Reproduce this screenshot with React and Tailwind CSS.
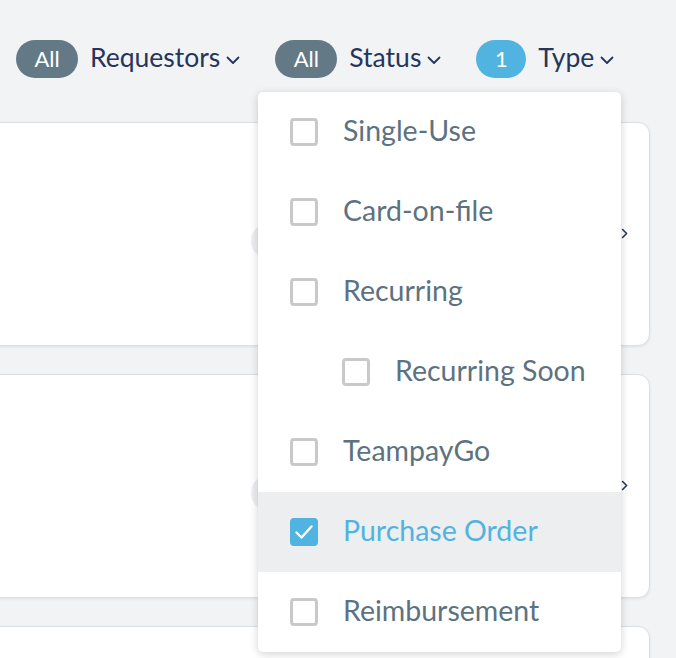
import React from 'react';

const font = { fontFamily: 'Lato, "Noto Sans", sans-serif' };

function Chevron({ className }) {
  return (
    <svg viewBox="0 0 16 16" className={className} fill="none" stroke="currentColor" strokeWidth="1.8" strokeLinecap="round" strokeLinejoin="round">
      <path d="M2.5 5.5l5.5 5.5 5.5-5.5" />
    </svg>
  );
}

function Filter({ count, label, active }) {
  return (
    <div className="flex items-center">
      <span
        className={`flex h-[38px] items-center justify-center rounded-full pb-[2px] text-[22px] text-white ${
          active ? 'w-[50px] bg-[#51b3e0]' : 'w-[62px] bg-[#637985]'
        }`}
      >
        {count}
      </span>
      <span className="ml-[12px] pb-[4px] text-[26.5px] leading-none text-[#26355c]">{label}</span>
      <Chevron className="ml-[5px] mt-[2px] h-[16px] w-[16px] text-[#26355c]" />
    </div>
  );
}

function Checkbox({ checked }) {
  if (checked) {
    return (
      <span className="flex h-[28px] w-[28px] shrink-0 items-center justify-center rounded-[4px] bg-[#51b3e0]">
        <svg viewBox="0 0 28 28" className="h-[28px] w-[28px]" fill="none" stroke="white" strokeWidth="2.4" strokeLinecap="round" strokeLinejoin="round">
          <path d="M6.5 14.5l5 5 10-11" />
        </svg>
      </span>
    );
  }
  return <span className="h-[28px] w-[28px] shrink-0 rounded-[4px] border-[3px] border-[#c9c9c9] bg-white" />;
}

const items = [
  { label: 'Single-Use' },
  { label: 'Card-on-file' },
  { label: 'Recurring' },
  { label: 'Recurring Soon', nested: true },
  { label: 'TeampayGo' },
  { label: 'Purchase Order', checked: true },
  { label: 'Reimbursement' },
];

function Card() {
  return (
    <div className="relative flex h-[224px] w-[676px] items-center rounded-r-[12px] border border-[#dcdfe3] bg-white shadow-[0_1px_3px_rgba(0,0,0,0.08)]">
      <span className="absolute left-[276px] top-[100px] h-[36px] w-[36px] rounded-full bg-[#eceef1]" />
      <svg viewBox="0 0 10 14" className="absolute left-[646px] top-[104px] h-[13px] w-[8px] text-[#26355c]" fill="none" stroke="currentColor" strokeWidth="2" strokeLinecap="round" strokeLinejoin="round">
        <path d="M2 2l5 5-5 5" />
      </svg>
    </div>
  );
}

export default function App() {
  return (
    <div className="relative h-[658px] w-[676px] overflow-hidden bg-[#f2f3f5]" style={font}>
      <div className="flex items-center gap-[34px] pl-[16px] pt-[40px]">
        <Filter count="All" label="Requestors" />
        <Filter count="All" label="Status" />
        <Filter count="1" label="Type" active />
      </div>

      <div className="ml-[-26px] mt-[44px] flex flex-col gap-[28px]">
        <Card />
        <Card />
        <Card />
      </div>

      <div className="absolute left-[258px] top-[92px] w-[363px] overflow-hidden rounded-[5px] bg-white shadow-[0_2px_8px_rgba(0,0,0,0.18)]">
        {items.map((it) => (
          <div
            key={it.label}
            className={`flex h-[80px] items-center ${it.nested ? 'pl-[84px]' : 'pl-[32px]'} ${
              it.checked ? 'bg-[#edeef0]' : ''
            }`}
          >
            <Checkbox checked={it.checked} />
            <span className={`ml-[25px] pb-[4px] text-[28.5px] leading-none ${it.checked ? 'text-[#51b3e0]' : 'text-[#5d7280]'}`}>
              {it.label}
            </span>
          </div>
        ))}
      </div>
    </div>
  );
}
